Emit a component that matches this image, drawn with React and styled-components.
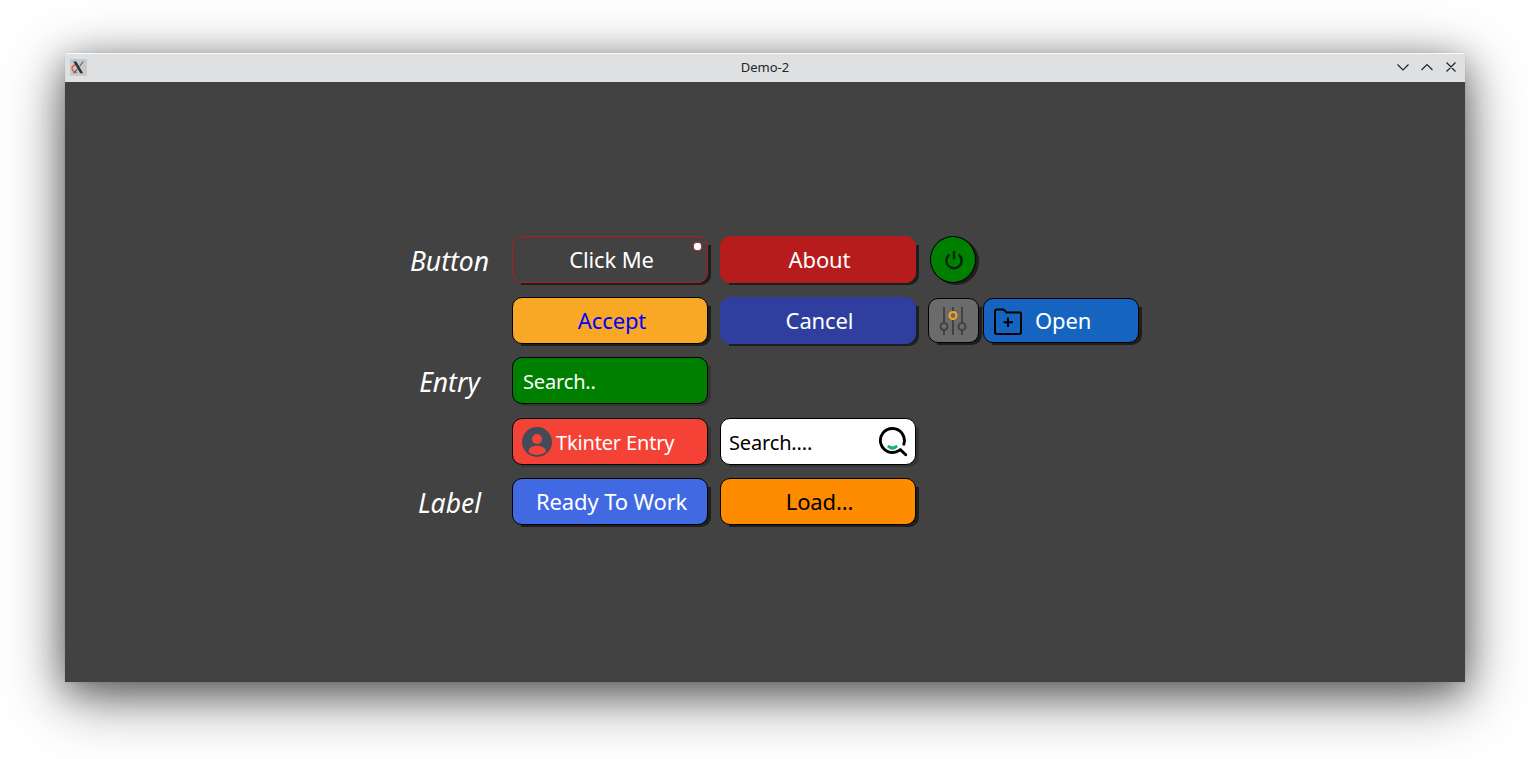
import React from 'react';
import styled, { createGlobalStyle } from 'styled-components';

const GlobalStyle = createGlobalStyle`
  * { box-sizing: border-box; }
  body {
    margin: 0;
    background: #fff;
    font-family: "Noto Sans", sans-serif;
    overflow: hidden;
  }
`;

const Desktop = styled.div`
  width: 1530px;
  height: 759px;
  padding: 53px 65px 0;
  background: #fff;
`;

const Window = styled.section`
  display: flex;
  flex-direction: column;
  height: 629px;
  border-radius: 4px 4px 0 0;
  box-shadow: 0 0 1px rgba(0, 0, 0, 0.3), 0 15px 60px rgba(0, 0, 0, 0.55), 0 8px 32px rgba(0, 0, 0, 0.32);
`;

const TitleBar = styled.header`
  display: grid;
  grid-template-columns: 80px 1fr 80px;
  align-items: center;
  height: 29px;
  border-top: 1px solid #fbfbfc;
  border-radius: 4px 4px 0 0;
  background: #dee0e2;
`;

const AppIcon = styled.svg`
  width: 17px;
  height: 17px;
  margin: 0 0 2px 5px;
`;

const Title = styled.h1`
  margin: 0;
  text-align: center;
  font-size: 13px;
  font-weight: 400;
  line-height: 26px;
  padding-bottom: 2px;
  color: #232629;
`;

const WindowControls = styled.svg`
  justify-self: end;
  width: 72px;
  height: 28px;
  margin-right: 2px;
`;

const Content = styled.main`
  flex: 1;
  padding: 154px 0 0 323px;
  background: #424242;
`;

const WidgetGrid = styled.div`
  display: grid;
  grid-template-columns: 124px 208px 208px 230px;
  grid-template-rows: 61px 60px 61px 60px 47px;
`;

const RowLabel = styled.div`
  grid-column: 1;
  grid-row: ${(p) => p.$row};
  height: 48px;
  padding-right: 1px;
  line-height: 51px;
  text-align: center;
  font-size: 26.5px;
  font-style: italic;
  color: #fff;
`;

const Cell = styled.div`
  display: flex;
  gap: 4px;
  grid-column: ${(p) => p.$col};
  grid-row: ${(p) => p.$row};
`;

const Control = styled.div`
  position: relative;
  width: ${(p) => p.$width || 196}px;
  height: ${(p) => p.$height || 47}px;
  margin: ${(p) => p.$margin || '0'};

  &::before {
    content: "";
    position: absolute;
    inset: ${(p) => (p.$round ? '2px -3px -2px 3px' : '9px -3px -2px 9px')};
    border-radius: ${(p) => (p.$round ? '50%' : '0 0 10px 0')};
    background: ${(p) => (p.$soft ? '#343434' : '#1e1e1e')};
  }
`;

const Face = styled.div`
  position: relative;
  display: flex;
  align-items: center;
  justify-content: ${(p) => (p.$start ? 'flex-start' : 'center')};
  width: 100%;
  height: 100%;
  padding: 0 0 0 ${(p) => (p.$pad === undefined ? 3 : p.$pad)}px;
  border: 1px solid ${(p) => p.$border || '#000'};
  border-radius: ${(p) => (p.$round ? '50%' : '10px')};
  background: ${(p) => p.$bg};
`;

const Caption = styled.span`
  padding-bottom: 2px;
  white-space: nowrap;
  line-height: 30px;
  color: ${(p) => p.$color || '#fff'};
  font-size: 22px;
  letter-spacing: -0.12px;
  margin-left: ${(p) => p.$ml || 0}px;
`;

const EntryText = styled(Caption)`
  padding: 2px 0 0;
  font-size: 20px;
  letter-spacing: -0.16px;
`;

const Badge = styled.span`
  position: absolute;
  top: 5px;
  right: 5px;
  width: 9px;
  height: 9px;
  border: 1px solid #b71c1c;
  border-radius: 3.5px;
  background: #fff;
`;

const Icon = styled.svg`
  flex: none;
  width: ${(p) => p.$w}px;
  height: ${(p) => p.$h}px;
  margin: ${(p) => p.$m || '0'};
`;

const TrailingIcon = styled.div`
  display: flex;
  margin: 0 7px 0 auto;
`;

function XLogo() {
  return (
    <AppIcon viewBox="0 0 17 17">
      <rect width="17" height="17" rx="1" fill="#c3cbd0" />
      <path d="M5.500 5.800C2.800 6.500 1.600 8 2.200 10.200C2.800 12 4.500 13.200 7 13.700" fill="none" stroke="#e8603a" strokeWidth="1.500" />
      <path d="M7 13.700C11 14.200 15 12 15 9.200C15 7.500 13.500 6.300 11.500 5.800" fill="none" stroke="#e6c092" strokeWidth="1.100" />
      <path d="M13.300 2.500L9.500 7.500M7.300 10.200L3.500 14.300" stroke="#5b6063" strokeWidth="1.100" />
      <path d="M3.300 2.500H6.300L13.200 14.300H10.200Z" fill="#2e3336" />
    </AppIcon>
  );
}

function PowerIcon() {
  return (
    <Icon $w={18} $h={20} viewBox="0 0 18 20" fill="none" stroke="#042604" strokeWidth="2.400">
      <path d="M4.500 4.500A7.600 7.600 0 1 0 13.500 4.500M9 1V9.500" />
    </Icon>
  );
}

function SlidersIcon() {
  return (
    <Icon $w={28} $h={28} viewBox="0 0 28 28" fill="none" stroke="#424242" strokeWidth="2">
      <path d="M5 0V15.500M5 23.500V28M14 0V4.500M14 12.500V28M23 0V15.500M23 23.500V28" />
      <circle cx="5" cy="19.500" r="3.500" />
      <circle cx="23" cy="19.500" r="3.500" />
      <circle cx="14" cy="8.500" r="3.500" stroke="#f9a825" />
    </Icon>
  );
}

function FolderIcon() {
  return (
    <Icon $w={28} $h={28} $m="2px 0 0" viewBox="0 0 28 28" fill="none" stroke="#000" strokeWidth="2">
      <path d="M3 1.500H9.500L12.500 4.500H26Q27 4.500 27 5.500V24Q27 26 25 26H3Q1 26 1 24V3.500Q1 1.500 3 1.500Z" />
      <path d="M14 9.500V19M9.500 14.200H19" />
    </Icon>
  );
}

function PersonIcon() {
  return (
    <Icon $w={30} $h={30} $m="1px 0 0" viewBox="0 0 30 30">
      <circle cx="15" cy="15" r="15" fill="#424b57" />
      <circle cx="15" cy="12" r="5" fill="#f44336" />
      <path d="M6.500 25C6.500 21 10 18.800 15 18.800S24 21 24 25Q20 28 15 28T6.500 25Z" fill="#f44336" />
    </Icon>
  );
}

function SearchIcon() {
  return (
    <Icon $w={30} $h={30} viewBox="0 0 30 30" fill="none" strokeLinecap="round">
      <path d="M25.800 17.200A12 12 0 1 0 20.500 23.800L22.300 22.600L27.700 27.800" stroke="#000" strokeWidth="2.900" strokeLinejoin="round" />
      <path d="M11 19.800Q14.500 22.200 18 19.800" stroke="#12b76a" strokeWidth="3.200" />
    </Icon>
  );
}

export default function App() {
  return (
    <>
      <GlobalStyle />
      <Desktop>
        <Window>
          <TitleBar>
            <XLogo />
            <Title>Demo-2</Title>
            <WindowControls viewBox="0 0 72 28" fill="none" stroke="#232629" strokeWidth="1.200">
              <path d="M6.500 10.500L12 16L17.500 10.500M30.500 16L36 10.500L41.500 16M55.500 8.500L64.500 17.500M64.500 8.500L55.500 17.500" />
            </WindowControls>
          </TitleBar>
          <Content>
            <WidgetGrid>
              <RowLabel $row={1}>Button</RowLabel>
              <Cell $row={1} $col={2}>
                <Control>
                  <Face $bg="#424242" $border="#b71c1c">
                    <Caption>Click Me</Caption>
                    <Badge />
                  </Face>
                </Control>
              </Cell>
              <Cell $row={1} $col={3}>
                <Control>
                  <Face $bg="#b71c1c" $border="#b71c1c">
                    <Caption>About</Caption>
                  </Face>
                </Control>
              </Cell>
              <Cell $row={1} $col={4}>
                <Control $width={46} $round $margin="0 0 0 2px">
                  <Face $bg="#008000" $round $pad={2}>
                    <PowerIcon />
                  </Face>
                </Control>
              </Cell>

              <Cell $row={2} $col={2}>
                <Control>
                  <Face $bg="#f9a825" $pad={4}>
                    <Caption $color="#0000ff">Accept</Caption>
                  </Face>
                </Control>
              </Cell>
              <Cell $row={2} $col={3}>
                <Control>
                  <Face $bg="#303f9f" $border="#303f9f">
                    <Caption>Cancel</Caption>
                  </Face>
                </Control>
              </Cell>
              <Cell $row={2} $col={4}>
                <Control $width={51} $height={45} $margin="1px 0 0">
                  <Face $bg="#6b6b6b" $start $pad={10}>
                    <SlidersIcon />
                  </Face>
                </Control>
                <Control $width={156} $height={45} $margin="1px 0 0">
                  <Face $bg="#1565c0" $start $pad={10}>
                    <FolderIcon />
                    <Caption $ml={13}>Open</Caption>
                  </Face>
                </Control>
              </Cell>

              <RowLabel $row={3}>Entry</RowLabel>
              <Cell $row={3} $col={2}>
                <Control $soft>
                  <Face $bg="#008000" $start $pad={10}>
                    <EntryText>Search..</EntryText>
                  </Face>
                </Control>
              </Cell>

              <Cell $row={4} $col={2}>
                <Control $soft>
                  <Face $bg="#f44336" $start $pad={9}>
                    <PersonIcon />
                    <EntryText $ml={4}>Tkinter Entry</EntryText>
                  </Face>
                </Control>
              </Cell>
              <Cell $row={4} $col={3}>
                <Control $soft>
                  <Face $bg="#fff" $start $pad={8}>
                    <EntryText $color="#000">Search....</EntryText>
                    <TrailingIcon>
                      <SearchIcon />
                    </TrailingIcon>
                  </Face>
                </Control>
              </Cell>

              <RowLabel $row={5}>Label</RowLabel>
              <Cell $row={5} $col={2}>
                <Control>
                  <Face $bg="#4169e1" $start $pad={23}>
                    <Caption>Ready To Work</Caption>
                  </Face>
                </Control>
              </Cell>
              <Cell $row={5} $col={3}>
                <Control>
                  <Face $bg="#ff8c00">
                    <Caption $color="#000">Load...</Caption>
                  </Face>
                </Control>
              </Cell>
            </WidgetGrid>
          </Content>
        </Window>
      </Desktop>
    </>
  );
}
